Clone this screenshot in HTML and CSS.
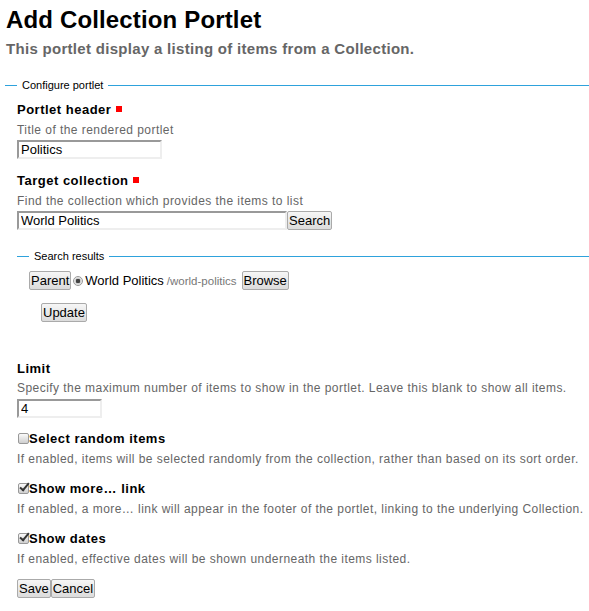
FILE: index.html
```html
<!DOCTYPE html>
<html lang="en">
<head>
  <meta charset="UTF-8" />
  <title>Add Collection Portlet</title>
  <link rel="stylesheet" href="styles.css">
</head>
<body>

  <h1 class="title">Add Collection Portlet</h1>
  <p class="lead">This portlet display a listing of items from a Collection.</p>

  <form class="portlet-form">
    <fieldset class="group">
      <legend>Configure portlet</legend>

      <div class="field">
        <label for="header">Portlet header <span class="required"></span></label>
        <div class="help">Title of the rendered portlet</div>
        <input type="text" id="header" class="text short" value="Politics" />
      </div>

      <div class="field">
        <label for="target">Target collection <span class="required"></span></label>
        <div class="help">Find the collection which provides the items to list</div>
        <div class="search-row">
          <input type="text" id="target" class="text long" value="World Politics" /><button type="button" class="btn">Search</button>
        </div>

        <fieldset class="group nested">
          <legend>Search results</legend>
          <div class="result-row">
            <button type="button" class="btn">Parent</button><input type="radio" name="coll" class="radio" checked /><span class="result-title">World Politics</span>
            <span class="result-path">/world-politics</span>
            <button type="button" class="btn">Browse</button>
          </div>
          <div class="update-row">
            <button type="button" class="btn">Update</button>
          </div>
        </fieldset>
      </div>

      <div class="field limit">
        <label for="limit">Limit</label>
        <div class="help">Specify the maximum number of items to show in the portlet. Leave this blank to show all items.</div>
        <input type="text" id="limit" class="text tiny" value="4" />
      </div>

      <div class="field option">
        <label class="check"><input type="checkbox" class="box" />Select random items</label>
        <div class="help">If enabled, items will be selected randomly from the collection, rather than based on its sort order.</div>
      </div>

      <div class="field option">
        <label class="check"><input type="checkbox" class="box" checked />Show more… link</label>
        <div class="help">If enabled, a more… link will appear in the footer of the portlet, linking to the underlying Collection.</div>
      </div>

      <div class="field option">
        <label class="check"><input type="checkbox" class="box" checked />Show dates</label>
        <div class="help">If enabled, effective dates will be shown underneath the items listed.</div>
      </div>

      <div class="actions">
        <button type="button" class="btn">Save</button><button type="button" class="btn">Cancel</button>
      </div>
    </fieldset>
  </form>

</body>
</html>
```

FILE: styles.css
```css
body {
  margin: 0;
  padding: 0 0 0 6px;
  font-family: "Liberation Sans", Arial, sans-serif;
  font-size: 13px;
  color: #000;
  background: #fff;
}
.title {
  font-size: 24px;
  font-weight: bold;
  letter-spacing: 0.15px;
  margin: 5px 0 0;
  line-height: 30px;
}
.lead {
  font-size: 15px;
  font-weight: bold;
  letter-spacing: 0.3px;
  color: #666;
  margin: 4px 0 0;
  line-height: 20px;
}
.portlet-form { margin-top: 20px; }
.group {
  border-style: solid none none;
  border-width: 1px 0 0;
  border-color: #2ea2dc;
  margin: 0 0 0 -1px;
  padding: 8px 0 0 12px;
  min-width: 0;
}
.group legend {
  font-size: 11px;
  line-height: 13px;
  padding: 0 5px;
}
.field { margin-bottom: 12px; }
.field.limit { margin-bottom: 11px; }
.field.option { margin-bottom: 11px; }
.field label {
  display: block;
  font-weight: bold;
  font-size: 13px;
  letter-spacing: 0.5px;
  line-height: 20px;
}
.required {
  display: inline-block;
  width: 6px;
  height: 6px;
  background: #f00;
  vertical-align: 2px;
}
.help {
  color: #666;
  font-size: 12px;
  letter-spacing: 0.45px;
  line-height: 18px;
  margin: 1px 0 1px;
}
.limit .help { margin-top: 0; margin-bottom: 2px; }
.option .help { margin-bottom: 0; }
.text {
  font-family: "Liberation Sans", Arial, sans-serif;
  font-size: 13px;
  height: 19px;
  box-sizing: border-box;
  padding: 0 2px;
  margin: 0;
  border: 2px solid #eee;
  border-top-color: #999;
  border-left-color: #999;
  vertical-align: middle;
}
.short { width: 145px; }
.long { width: 270px; }
.tiny { width: 85px; }
.btn {
  font-family: "Liberation Sans", Arial, sans-serif;
  font-size: 13px;
  height: 19px;
  padding: 0 1px;
  margin: 0;
  border: 1px solid #aaa;
  border-radius: 2px;
  background: linear-gradient(#f6f6f6, #dcdcdc);
  color: #000;
  vertical-align: middle;
}
.nested {
  margin: 20px 0 0 0;
  padding: 8px 0 0 12px;
}
.result-row {
  display: flex;
  align-items: center;
  height: 19px;
}
.radio {
  appearance: none;
  -webkit-appearance: none;
  box-sizing: border-box;
  width: 10px;
  height: 10px;
  margin: 0 2px 0 2px;
  border: 1px solid #999;
  border-radius: 50%;
  background: linear-gradient(#fff, #ccc);
}
.radio:checked {
  background: radial-gradient(circle, #444 0 2px, #ccc 2.5px, #eee 4px);
}
.result-title { font-size: 13px; }
.result-path {
  font-size: 11.5px;
  color: #777;
  margin: 0 5px 0 3px;
}
.update-row {
  padding: 13px 0 0 12px;
  margin-bottom: 25px;
}
.box {
  appearance: none;
  -webkit-appearance: none;
  position: relative;
  box-sizing: border-box;
  width: 11px;
  height: 11px;
  margin: 0 0 0 1px;
  border: 1px solid #999;
  border-radius: 2px;
  background: linear-gradient(#fafafa, #cfcfcf);
  vertical-align: -0.5px;
}
.box:checked::after {
  content: "";
  position: absolute;
  left: 3px;
  top: -3px;
  width: 3px;
  height: 8px;
  border: solid #333;
  border-width: 0 2px 2px 0;
  transform: rotate(40deg);
}
.actions { margin-top: 11px; }
```
